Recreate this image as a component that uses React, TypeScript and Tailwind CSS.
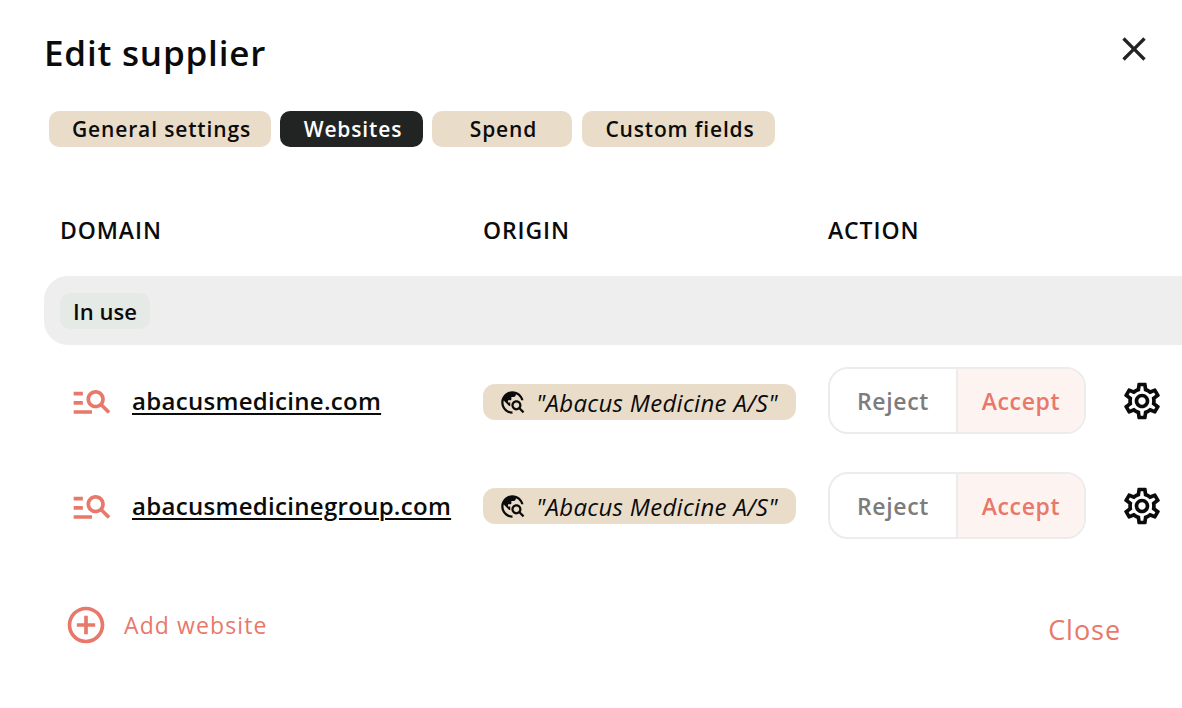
import {
  MdAddCircleOutline,
  MdClose,
  MdManageSearch,
  MdOutlineSettings,
  MdTravelExplore,
} from "react-icons/md";

const tabs = [
  { label: "General settings", width: "w-[222px]" },
  { label: "Websites", width: "w-[143px]", active: true },
  { label: "Spend", width: "w-[140px]" },
  { label: "Custom fields", width: "w-[193px]", extra: "ml-px" },
];

const rows = ["abacusmedicine.com", "abacusmedicinegroup.com"];

const App = () => {
  return (
    <div className="w-[1182px] h-[708px] overflow-hidden bg-white font-['Open_Sans',sans-serif] text-[#0b0b0b] pl-[44px]">
      <div className="flex items-center justify-between h-[46px] mt-[30px] pr-[28px]">
        <h1 className="text-[35px] font-semibold tracking-[0.8px]">Edit supplier</h1>
        <MdClose className="text-[#222423] -mt-[8px]" size={40} />
      </div>

      <div className="flex gap-[9px] mt-[35px] ml-[5px]">
        {tabs.map((tab) => (
          <div
            key={tab.label}
            className={`${tab.width} ${tab.extra ?? ""} h-[36px] flex items-center justify-center rounded-[10px] pt-[2px] pl-[3px] text-[21px] font-semibold tracking-[0.85px] ${
              tab.active ? "bg-[#222423] text-white" : "bg-[#e9ddca]"
            }`}
          >
            {tab.label}
          </div>
        ))}
      </div>

      <div className="grid grid-cols-[423px_345px_auto] mt-[67px] pl-[16px] text-[23px] font-semibold tracking-[0.9px] leading-[32px]">
        <div>DOMAIN</div>
        <div>ORIGIN</div>
        <div>ACTION</div>
      </div>

      <div className="flex items-center h-[69px] mt-[30px] pl-[16px] rounded-l-[24px] bg-[#eeeeee]">
        <div className="h-[36px] w-[90px] flex items-center justify-center rounded-[10px] pt-[2px] bg-[#e5eae6] text-[22px] font-semibold">
          In use
        </div>
      </div>

      <div className="mt-[22px] flex flex-col gap-[38px]">
        {rows.map((domain, i) => (
          <div key={domain} className="flex items-center h-[67px]">
            <div className="w-[439px] flex items-center pl-[26px]">
              <MdManageSearch className="text-[#e8786a] shrink-0" size={44} />
              <a className="ml-[18px] text-[24px] font-semibold tracking-[0.3px] underline underline-offset-[3px] decoration-2 whitespace-nowrap">
                {domain}
              </a>
            </div>
            <div className={`w-[345px] ${i === 0 ? "mt-[2px]" : ""}`}>
              <div className="w-[313px] h-[36px] flex items-center pl-[16px] rounded-[12px] bg-[#e9ddca] text-[24px] italic tracking-[0.3px]">
                <MdTravelExplore className="shrink-0 mt-[2px]" size={27} />
                <span className="ml-[10px] pt-[3px] whitespace-nowrap">"Abacus Medicine A/S"</span>
              </div>
            </div>
            <div className="w-[258px] h-[67px] flex rounded-[20px] border-2 border-[#ececec] overflow-hidden text-[23px] font-semibold tracking-[0.65px]">
              <div className="w-[128px] flex items-center justify-center pt-[2px] border-r-2 border-[#ececec] text-[#7c7c7c]">
                Reject
              </div>
              <div className="flex-1 flex items-center justify-center pt-[2px] bg-[#fdf3f1] text-[#e8786a]">
                Accept
              </div>
            </div>
            <MdOutlineSettings className="ml-[34px]" size={44} />
          </div>
        ))}
      </div>

      <div className="flex justify-between mt-[64px] pr-[61px]">
        <div className="flex items-center h-[44px] pl-[20px] text-[#e8786a]">
          <MdAddCircleOutline size={44} />
          <span className="ml-[16px] text-[23px] font-medium tracking-[1.1px]">Add website</span>
        </div>
        <div className="mt-[7px] text-[27px] font-medium tracking-[0.95px] text-[#e8786a]">Close</div>
      </div>
    </div>
  );
};

export default App;
